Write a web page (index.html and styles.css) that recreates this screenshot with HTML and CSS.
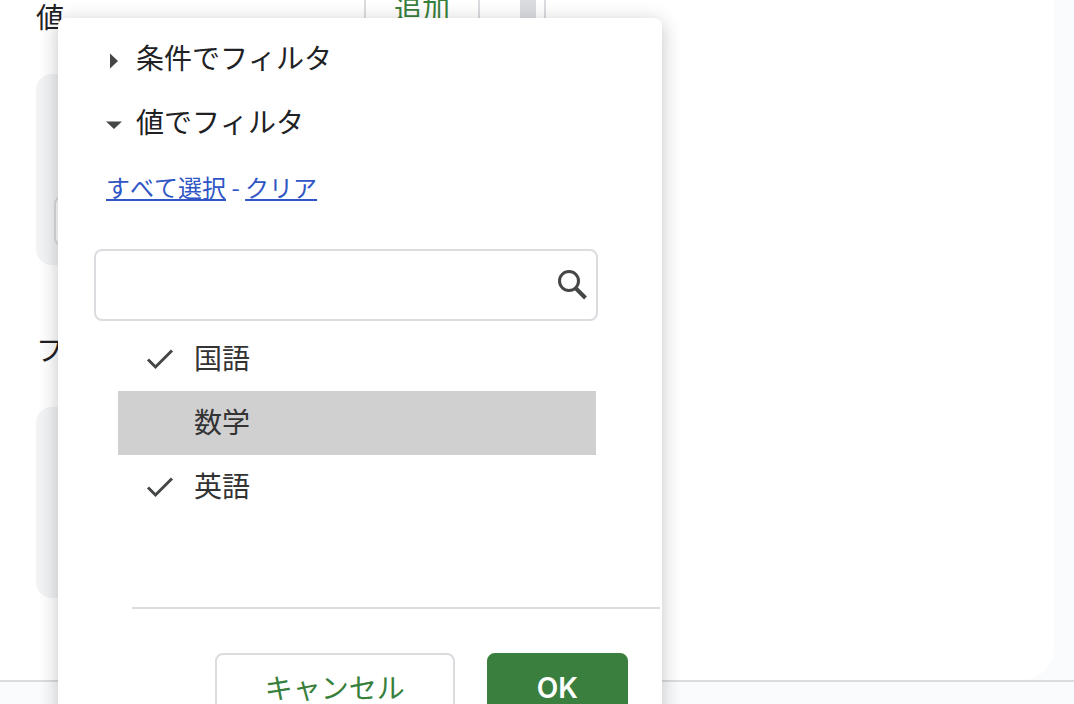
FILE: index.html
```html
<!DOCTYPE html>
<html lang="ja">
<head>
<meta charset="utf-8">
<meta name="viewport" content="width=device-width, initial-scale=1">
<title>値でフィルタ</title>
<link rel="stylesheet" href="styles.css">
</head>
<body>
<div class="app">
  <main class="workspace">
    <aside class="editor">
      <div class="editor-content">
        <section class="group">
          <div class="group-header">
            <h2 class="group-title">値</h2>
            <button class="button add-button" type="button">追加</button>
          </div>
          <div class="card"><div class="card-field"></div></div>
        </section>
        <section class="group">
          <div class="group-header">
            <h2 class="group-title">フィルタ</h2>
          </div>
          <div class="card"></div>
        </section>
      </div>
      <div class="scrollbar"></div>
    </aside>
  </main>
  <footer class="status-bar"></footer>

  <div class="popup" role="dialog" aria-label="フィルタ">
    <button class="disclosure" type="button" aria-expanded="false">
      <svg class="arrow" viewBox="0 0 16 16" aria-hidden="true"><path d="M4 0.500 12 8 4 15.500z"/></svg>
      条件でフィルタ
    </button>
    <button class="disclosure" type="button" aria-expanded="true">
      <svg class="arrow" viewBox="0 0 16 16" aria-hidden="true"><path d="M0 4.500h16L8 12z"/></svg>
      値でフィルタ
    </button>
    <p class="select-links"><a href="#all">すべて選択</a> - <a href="#clear">クリア</a></p>
    <div class="search">
      <input class="search-input" type="text" aria-label="検索">
      <svg class="search-icon" viewBox="0 0 32 32" aria-hidden="true"><circle cx="13" cy="12" r="9.500"/><path class="handle" d="M20 19.500 29.500 29"/></svg>
    </div>
    <ul class="values">
      <li><label class="value">
        <input class="value-box" type="checkbox" checked>
        <svg class="check" viewBox="0 0 28 28" aria-hidden="true"><path d="m2 14.500 7.500 7.500L26 5.500"/></svg>
        <span class="value-text">国語</span>
      </label></li>
      <li><label class="value value-active">
        <input class="value-box" type="checkbox">
        <svg class="check" viewBox="0 0 28 28" aria-hidden="true"><path d="m2 14.500 7.500 7.500L26 5.500"/></svg>
        <span class="value-text">数学</span>
      </label></li>
      <li><label class="value">
        <input class="value-box" type="checkbox" checked>
        <svg class="check" viewBox="0 0 28 28" aria-hidden="true"><path d="m2 14.500 7.500 7.500L26 5.500"/></svg>
        <span class="value-text">英語</span>
      </label></li>
    </ul>
    <hr class="divider">
    <div class="actions">
      <button class="button cancel-button" type="button">キャンセル</button>
      <button class="button ok-button" type="button">OK</button>
    </div>
  </div>
</div>
</body>
</html>
```

FILE: styles.css
```css
* {
  box-sizing: border-box;
}

body {
  margin: 0;
  color: #202124;
  font: 28px/36px "Noto Sans CJK JP", sans-serif;
  font-kerning: none;
}

button,
input {
  font: inherit;
  font-kerning: none;
  color: inherit;
}

.app {
  position: relative;
  display: flex;
  flex-direction: column;
  height: 100vh;
  overflow: hidden;
  background: #f9fbfd;
}

.workspace {
  flex: 1;
  display: flex;
  min-height: 0;
  margin-right: 20px;
  overflow: hidden;
  background: #fff;
  border-bottom-right-radius: 32px;
}

.status-bar {
  flex: none;
  height: 24px;
  border-top: 2px solid #dadce0;
}

.editor {
  display: flex;
  width: 546px;
  border-right: 2px solid #dadce0;
}

/* The panel is scrolled slightly past its first header. */
.editor-content {
  flex: 1;
  margin-top: -24px;
  padding: 0 40px 0 36px;
}

.group-header {
  display: flex;
  align-items: flex-end;
  justify-content: space-between;
  height: 64px;
}

.group-title {
  margin: 0;
  padding-bottom: 6px;
  font-size: 28px;
  font-weight: 400;
}

.group + .group {
  margin-top: 44px;
}

.button {
  border: 2px solid #dadce0;
  border-radius: 8px;
  background: #fff;
  color: #37803b;
  cursor: pointer;
}

.add-button {
  height: 64px;
  padding: 0 28px;
}

.card {
  height: 191px;
  margin-top: 34px;
  padding: 122px 18px 0;
  border-radius: 16px;
  background: #f1f3f4;
}

.card-field {
  height: 50px;
  border: 2px solid #dadce0;
  border-radius: 8px;
  background: #fff;
}

.scrollbar {
  width: 16px;
  margin-right: 8px;
  background: #dadce0;
}

.popup {
  position: absolute;
  top: 18px;
  left: 58px;
  width: 604px;
  padding: 7px 0 32px;
  border-radius: 8px;
  background: #fff;
  box-shadow: 0 4px 20px rgba(0, 0, 0, 0.24);
}

.disclosure {
  display: flex;
  align-items: center;
  gap: 14px;
  width: 100%;
  height: 64px;
  padding: 0 48px;
  border: 0;
  background: none;
  text-align: left;
  cursor: pointer;
}

.arrow {
  width: 16px;
  height: 16px;
  margin-top: 8px;
  fill: #444746;
}

.select-links {
  margin: 16px 48px 0;
  color: #3056c5;
  font-size: 24px;
}

.select-links a {
  color: inherit;
  text-decoration-thickness: 2px;
  text-underline-offset: 2px;
}

.search {
  display: flex;
  align-items: center;
  height: 72px;
  margin: 44px 64px 0 36px;
  padding-right: 8px;
  border: 2px solid #dadce0;
  border-radius: 8px;
}

.search-input {
  flex: 1;
  min-width: 0;
  height: 100%;
  padding: 0 12px;
  border: 0;
  outline: 0;
  background: none;
}

.search-icon {
  width: 32px;
  height: 32px;
  fill: none;
  stroke: #444746;
  stroke-width: 3;
}

.search-icon .handle {
  stroke-width: 4;
}

.values {
  margin: 6px 66px 0 60px;
  padding: 0;
  list-style: none;
}

.value {
  display: grid;
  grid-template-columns: 28px 1fr;
  column-gap: 20px;
  align-items: center;
  height: 64px;
  padding: 0 28px;
  color: #333;
  cursor: pointer;
}

.value-active {
  background: #d0d0d0;
}

.value-text {
  padding-bottom: 4px;
}

.value-box,
.check {
  grid-area: 1 / 1;
  width: 28px;
  height: 28px;
  margin: 0;
}

.value-box {
  appearance: none;
}

.check {
  visibility: hidden;
  fill: none;
  stroke: #444746;
  stroke-width: 3;
}

.value-box:checked + .check {
  visibility: visible;
}

.divider {
  height: 2px;
  margin: 88px 2px 0 74px;
  border: 0;
  background: #dadce0;
}

.actions {
  display: flex;
  justify-content: flex-end;
  gap: 32px;
  margin-top: 44px;
  padding-right: 34px;
}

.cancel-button,
.ok-button {
  height: 72px;
}

.cancel-button {
  padding: 0 48px 4px;
}

.ok-button {
  padding: 0 48px 2px;
  border-color: #3b7f3f;
  background: #3b7f3f;
  color: #fff;
  font-family: Inter, sans-serif;
  font-weight: 600;
}
```
